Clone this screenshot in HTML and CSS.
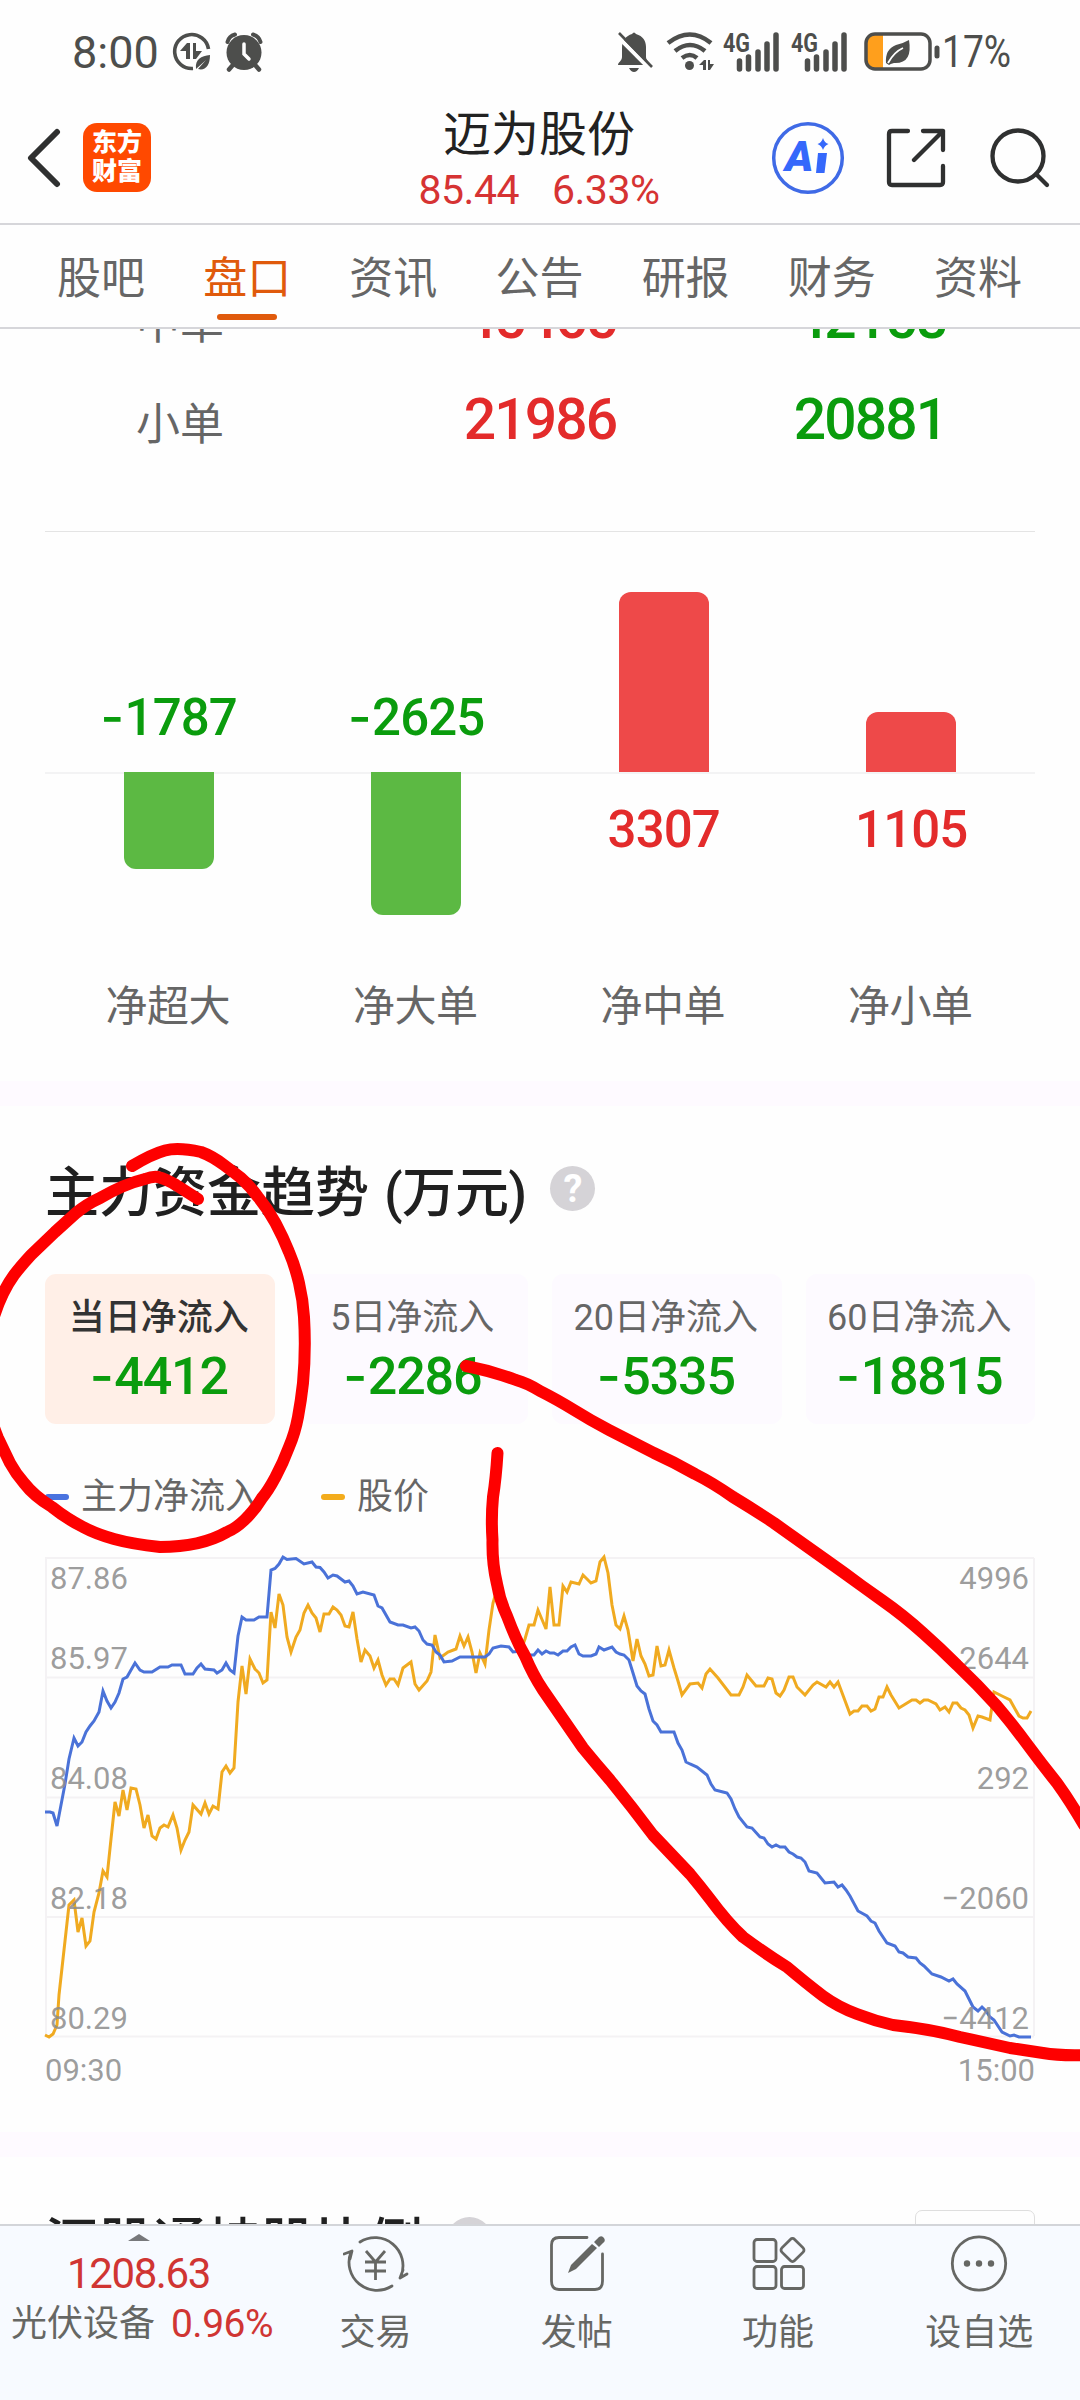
FILE: index.html
```html
<!DOCTYPE html>
<html lang="zh-CN">
<head>
  <meta charset="UTF-8">
  <meta name="viewport" content="width=device-width, initial-scale=1.0">
  <title>迈为股份</title>
  <link rel="stylesheet" href="styles.css">
</head>
<body>
  <div class="phone">
    <div class="status-bar">
      <span class="clock">8:00</span>
      <svg class="icon-data" width="39" height="40" viewBox="0 0 39 40">
        <path d="M36.500 17A17 17 0 1 0 21 36.500" fill="none" stroke="#4d4e4c" stroke-width="3.600"/>
        <path d="M8 19L15 11H18V27H14V19H8ZM21 11H24V19H30L24 27H21Z" fill="#4d4e4c"/>
        <path d="M24 37C23 27 29 24 38 23C38 34 33 39 26 37L34 28Z" fill="#4d4e4c"/>
      </svg>
      <svg class="icon-alarm" width="38" height="40" viewBox="0 0 38 40">
        <circle cx="19" cy="20.500" r="17.500" fill="#4d4e4c"/>
        <path d="M7 34L4 37.500M31 34L34 37.500" stroke="#4d4e4c" stroke-width="4.500" stroke-linecap="round"/>
        <path d="M2.500 10Q4 4 10 2.500M35.500 10Q34 4 28 2.500" fill="none" stroke="#4d4e4c" stroke-width="4" stroke-linecap="round"/>
        <path d="M19 12V22L24 27" fill="none" stroke="#fff" stroke-width="3.500" stroke-linecap="round"/>
      </svg>
      <div class="status-right">
        <svg class="icon-bell" width="36" height="42" viewBox="0 0 36 42">
          <path d="M1 34C1 31 5 30 5 26V17C5 9 9 5 15 3Q17 0 19 3C26 5 29 10 29 16V26C29 30 33 31 33 34Z" fill="#4d4e4c"/>
          <path d="M12 37H22Q20 41 17 41T12 37Z" fill="#4d4e4c"/>
          <path d="M-1 4L33 38" stroke="#fff" stroke-width="4"/>
          <path d="M2 2L35 36" stroke="#4d4e4c" stroke-width="2.600"/>
        </svg>
        <svg class="icon-wifi" width="48" height="40" viewBox="0 0 48 40">
          <path d="M2 11Q24 -6 45 11M9 19Q24 7 39 19M16 26Q24 20 31 26" fill="none" stroke="#4d4e4c" stroke-width="4.500"/>
          <circle cx="23.500" cy="33.500" r="4.500" fill="#4d4e4c"/>
          <path d="M33 33L38 28H40V38H37V33ZM42 28H44V32H48L44 38H42Z" fill="#4d4e4c"/>
        </svg>
        <svg class="icon-signal" width="58" height="40" viewBox="0 0 58 40">
          <text x="0" y="20" class="net-label" textLength="27" lengthAdjust="spacingAndGlyphs">4G</text>
          <path d="M16.500 29V37M25.500 25V37M35 20V37M44 12V37M53 3V37" stroke="#4d4e4c" stroke-width="5.500" stroke-linecap="round"/>
        </svg>
        <svg class="icon-signal" width="58" height="40" viewBox="0 0 58 40">
          <text x="0" y="20" class="net-label" textLength="27" lengthAdjust="spacingAndGlyphs">4G</text>
          <path d="M16.500 29V37M25.500 25V37M35 20V37M44 12V37M53 3V37" stroke="#4d4e4c" stroke-width="5.500" stroke-linecap="round"/>
        </svg>
        <svg class="icon-battery" width="77" height="40" viewBox="0 0 77 40">
          <path d="M3 9Q3 3 9 3H19V36H9Q3 36 3 30Z" fill="#ff9f1c"/>
          <rect x="2" y="2" width="64" height="35" rx="9" fill="none" stroke="#4d4e4c" stroke-width="3.500"/>
          <path d="M73 16V24" stroke="#4d4e4c" stroke-width="5" stroke-linecap="round"/>
          <path d="M22 31Q21 17 32 13Q40 11 45 8Q49 32 30 31Q26 32 25 33Z" fill="#4d4e4c"/>
          <path d="M24 31Q30 20 39 16" fill="none" stroke="#fff" stroke-width="1.800"/>
        </svg>
        <svg class="battery-level" width="67" height="40" viewBox="0 0 67 40">
          <text x="-3" y="35" textLength="69" lengthAdjust="spacingAndGlyphs">17%</text>
        </svg>
      </div>
    </div>

    <div class="header">
      <svg class="back" width="36" height="60" viewBox="0 0 36 60">
        <path d="M31 4L5 30L31 56" fill="none" stroke="#2f3030" stroke-width="6" stroke-linecap="round" stroke-linejoin="round"/>
      </svg>
      <div class="logo"><span>东方</span><span>财富</span></div>
      <div class="stock">
        <div class="stock-name">迈为股份</div>
        <div class="stock-price"><span>85.44</span><span>6.33%</span></div>
      </div>
      <svg class="ai" width="74" height="74" viewBox="0 0 74 74">
        <circle cx="37" cy="37" r="34.300" fill="none" stroke="#3f6ae6" stroke-width="3.500"/>
        <text x="14" y="50" class="ai-text">A</text>
        <path d="M47 32H56L53.500 52H45Z" fill="#3568fb"/>
        <path d="M52 17Q53.500 22 57.500 23Q53.500 24.500 52 29Q50.500 24.500 46.500 23Q50.500 22 52 17Z" fill="#3568fb"/>
      </svg>
      <svg class="share" width="60" height="60" viewBox="0 0 60 60">
        <path d="M22 3H6Q3 3 3 6V54Q3 57 6 57H54Q57 57 57 54V38M37 3H57V22M57 3L28 32" fill="none" stroke="#2f3030" stroke-width="4.300" stroke-linecap="round" stroke-linejoin="round"/>
      </svg>
      <svg class="search" width="62" height="62" viewBox="0 0 62 62">
        <circle cx="29" cy="29" r="25.500" fill="none" stroke="#2f3030" stroke-width="4.300"/>
        <path d="M47 47L58 58" stroke="#2f3030" stroke-width="4.300" stroke-linecap="round"/>
      </svg>
    </div>

    <div class="tabs">
      <span class="tab">股吧</span>
      <span class="tab active">盘口</span>
      <span class="tab">资讯</span>
      <span class="tab">公告</span>
      <span class="tab">研报</span>
      <span class="tab">财务</span>
      <span class="tab">资料</span>
    </div>

    <div class="content">
      <div class="orders">
        <div class="order-row"><span class="order-name">中单</span><span class="order-num red">45465</span><span class="order-num green">42158</span></div>
        <div class="order-row"><span class="order-name">小单</span><span class="order-num red">21986</span><span class="order-num green">20881</span></div>
      </div>

      <div class="net-chart">
        <div class="net-col">
          <div class="half top"><span class="net-value green"><i>-</i>1787</span></div>
          <div class="half bottom"><div class="bar down" style="height: 97px"></div></div>
          <div class="net-name">净超大</div>
        </div>
        <div class="net-col">
          <div class="half top"><span class="net-value green"><i>-</i>2625</span></div>
          <div class="half bottom"><div class="bar down" style="height: 143px"></div></div>
          <div class="net-name">净大单</div>
        </div>
        <div class="net-col">
          <div class="half top"><div class="bar up" style="height: 180px"></div></div>
          <div class="half bottom"><span class="net-value red">3307</span></div>
          <div class="net-name">净中单</div>
        </div>
        <div class="net-col">
          <div class="half top"><div class="bar up" style="height: 60px"></div></div>
          <div class="half bottom"><span class="net-value red">1105</span></div>
          <div class="net-name">净小单</div>
        </div>
      </div>

      <div class="band"></div>

      <div class="trend">
        <div class="section-title">主力资金趋势<span class="unit">(万元)</span><span class="help">?</span></div>
        <div class="cards">
          <div class="card selected"><div class="card-name">当日净流入</div><div class="card-num"><i>-</i>4412</div></div>
          <div class="card"><div class="card-name">5日净流入</div><div class="card-num"><i>-</i>2286</div></div>
          <div class="card"><div class="card-name">20日净流入</div><div class="card-num"><i>-</i>5335</div></div>
          <div class="card"><div class="card-name">60日净流入</div><div class="card-num"><i>-</i>18815</div></div>
        </div>
        <div class="legend">
          <span class="legend-item"><b class="dash blue"></b>主力净流入</span>
          <span class="legend-item"><b class="dash yellow"></b>股价</span>
        </div>
        <svg class="line-chart" width="990" height="530" viewBox="0 0 990 530">
          <path d="M0 0H989M0 119.500H989M0 239.500H989M0 359H989M0 478.500H989M1 0V478M989 0V478" class="grid"/>
          <polyline class="price" points="0,477 4,479 8,476 12,467 14,437 20,383 24,347 29,342 33,374 37,360 41,388 45,383 49,354 54,335 58,313 62,319 66,281 70,244 74,258 78,232 82,252 86,230 91,231 95,247 99,270 103,257 107,278 111,281 115,270 119,267 123,269 128,257 132,270 136,292 140,282 144,274 148,247 156,256 160,245 164,256 168,248 173,251 177,214 181,208 185,215 189,210 193,144 197,108 201,136 205,101 210,111 214,115 218,125 222,122 226,54 230,70 234,36 238,47 242,79 246,94 251,79 255,72 259,55 263,47 267,55 271,60 275,74 279,56 284,56 288,49 292,52 296,57 300,68 304,69 308,54 312,81 316,104 320,92 325,98 329,110 333,102 337,117 341,127 345,121 349,121 353,127 358,110 366,104 370,126 374,132 382,123 386,114 390,77 395,100 403,94 411,91 415,78 419,88 423,79 427,94 431,115 435,95 440,106 444,72 448,45 452,31 460,50 468,80 476,92 480,81 484,67 489,67 493,52 501,71 505,29 509,67 514,67 518,28 522,34 526,24 534,26 538,17 546,25 551,23 555,4 559,-1 563,15 567,47 571,67 575,71 579,58 583,72 588,103 592,81 596,98 600,106 604,118 608,117 612,88 616,108 620,107 624,92 629,110 633,123 637,137 645,126 653,125 657,130 661,116 665,111 673,120 686,137 694,137 698,129 702,117 711,128 719,128 723,120 727,121 731,135 735,138 739,132 744,119 748,119 752,129 760,137 768,127 772,124 781,129 785,124 789,129 793,124 805,156 809,153 813,153 817,148 822,148 826,153 830,151 834,139 838,139 842,129 846,137 854,150 867,142 871,142 875,145 879,142 883,142 891,146 895,152 900,149 904,154 908,145 912,145 916,150 920,152 924,157 928,170 933,158 937,159 945,162 949,134 957,138 965,142 974,158 978,160 982,160 986,153"/>
          <polyline class="flow" points="0,254 5,254 8,255 12,268 20,226 24,201 29,180 33,188 37,184 41,174 45,168 49,163 54,154 58,133 62,143 66,150 70,144 74,135 78,121 82,119 86,112 90,105 95,112 99,114 107,114 115,109 123,109 127,107 136,107 140,116 148,116 152,110 156,106 160,111 169,112 172,115 177,112 181,105 185,112 189,115 193,78 197,59 201,62 209,62 214,59 222,59 226,12 230,10.500 234,6 238,-1 242,1.500 251,0.500 259,6 267,4 271,9 275,9.500 279,14 283,20 288,17 292,18 300,24 304,23 308,28 312,36 318,34 329,37 333,48 337,50 345,64 353,67 358,67 366,70 370,69 374,73 378,82 382,86 387,87 391,94 395,97 399,104 407,103 415,99 423,99 440,99 444,96 448,90 456,88 464,89 468,94 477,93 485,97 489,97 493,92 497,96 501,93 505,95 509,95 513,97 518,93 522,93 526,89 530,87 534,96 538,98 546,98 551,96 554,89 559,92 567,89 571,94 575,96 579,97 584,102 588,115 592,128 596,133 600,136 604,151 608,163 612,167 616,174 629,174 633,185 637,192 641,204 645,206 652,209 662,217 666,226 670,232 678,234 682,235 686,241 690,251 694,259 702,269 707,270 715,279 719,280 723,286 727,289 731,287 735,289 740,289 744,294 748,296 752,299 756,300 760,304 764,313 772,315 780,325 789,324 793,329 797,327 801,332 805,338 813,353 822,358 826,363 830,365 834,373 842,385 850,388 854,394 858,395 863,399 871,400 875,405 879,408 887,416 896,419 904,423 908,421 912,426 920,433 924,441 928,449 933,453 937,449 941,453 945,459 949,462 957,474 965,478 969,477 974,479 986,479"/>
          <g class="axis">
            <text x="5" y="30.500">87.86</text>
            <text x="5" y="110.500">85.97</text>
            <text x="5" y="230.500">84.08</text>
            <text x="5" y="350.500">82.18</text>
            <text x="5" y="470.500">80.29</text>
            <text x="0" y="522.500">09:30</text>
          </g>
          <g class="axis end">
            <text x="984" y="30.500">4996</text>
            <text x="984" y="110.500">2644</text>
            <text x="984" y="230.500">292</text>
            <text x="984" y="350.500">−2060</text>
            <text x="984" y="470.500">−4412</text>
            <text x="990" y="522.500">15:00</text>
          </g>
        </svg>
      </div>

      <div class="band"></div>

      <div class="holding">
        <div class="section-title">深股通持股比例<span class="help">?</span></div>
        <div class="more"></div>
      </div>
    </div>

    <div class="bottom-bar">
      <div class="index">
        <div class="caret"></div>
        <div class="index-value">1208.63</div>
        <div class="index-line"><span>光伏设备</span><span class="index-rate">0.96%</span></div>
      </div>
      <div class="nav-item">
        <svg width="66" height="60" viewBox="0 0 66 60">
          <path d="M17 8A28 28 0 0 1 58 42M49 52A28 28 0 0 1 8 18M1 20L9 17L7 25M64 40L57 44L60 36" class="line"/>
          <path d="M23 17L32.500 28L42 17M22 28H43M22 37H43M32.500 28V46" class="line thin"/>
        </svg>
        <span>交易</span>
      </div>
      <div class="nav-item">
        <svg width="60" height="60" viewBox="0 0 60 60">
          <path d="M40 3.500H12Q4.500 3.500 4.500 11V47Q4.500 55.500 12 55.500H48Q55.500 55.500 55.500 47V20" class="line"/>
          <path d="M21 39L24 31L45 10L50 14L29 35Z M47 8L52 3Q55 1 57 4T56 9L52 13Z" fill="#666764"/>
        </svg>
        <span>发帖</span>
      </div>
      <div class="nav-item">
        <svg width="60" height="60" viewBox="0 0 60 60">
          <rect x="6" y="5.500" width="22" height="22" rx="3" class="line"/>
          <rect x="6" y="32.500" width="22" height="22" rx="3" class="line"/>
          <rect x="33.500" y="32.500" width="22" height="22" rx="3" class="line"/>
          <rect x="35.500" y="7" width="18" height="18" rx="3" transform="rotate(45 44.500 16)" class="line"/>
        </svg>
        <span>功能</span>
      </div>
      <div class="nav-item">
        <svg width="60" height="60" viewBox="0 0 60 60">
          <circle cx="30" cy="29.500" r="26.700" class="line"/>
          <circle cx="18" cy="29.500" r="3.200" fill="#666764"/>
          <circle cx="30" cy="29.500" r="3.200" fill="#666764"/>
          <circle cx="42" cy="29.500" r="3.200" fill="#666764"/>
        </svg>
        <span>设自选</span>
      </div>
    </div>

    <!-- hand drawn marks over the page -->
    <svg class="marks" width="1080" height="2400" viewBox="0 0 1080 2400">
      <path d="M132 1166Q152 1154 165 1150.500T201 1152Q212 1156 224 1165T241 1178Q250 1186 258 1197Q268 1209 275.500 1223T289 1252Q295 1266 299 1283T304 1317Q306 1350 303 1383Q301 1401 298 1417T289 1447Q283 1463 275.500 1477T262 1498Q254 1511 244.500 1520T227 1532Q201 1547 160 1547Q132 1544 114 1539T83 1527Q67 1519 52 1507Q34 1496 24 1483Q16 1474 10 1463L-2 1438Q-22 1390 -12 1340Q-4 1300 14 1275Q20 1267 31 1255L55 1232L76 1213Q87 1204 100 1198Q124 1184 145 1179Q153 1176 158 1177Q166 1179 176 1185L198 1199"/>
      <path d="M466 1366Q492 1371 516 1380Q527 1383 540 1391Q556 1399 574 1410Q590 1420 609 1430L654 1453Q674 1462 695 1474Q713 1483 733 1497Q753 1509 774 1523L826 1560Q843 1572 862 1586L883 1601Q903 1615 923 1633Q940 1648 957 1665Q977 1684 997 1706Q1013 1725 1027 1744T1057 1783Q1070 1801 1084 1825"/>
      <path d="M1088 2055Q1060 2056 1043 2053L1010 2048L960 2037Q930 2029 893 2025Q875 2021 857 2014Q838 2007 823 1996Q806 1983 787 1967Q766 1954 743 1937Q727 1922 710 1899Q700 1886 690 1874Q671 1854 653 1835Q632 1807 610 1780Q597 1765 583 1748Q563 1719 543 1690Q533 1675 525 1656Q516 1640 507 1616Q500 1601 497 1584Q492 1563 492.500 1540Q491 1518 493 1497Q496 1478 497.500 1453"/>
    </svg>
  </div>
</body>
</html>
```
FILE: styles.css
```css
* {
  margin: 0;
  padding: 0;
  box-sizing: border-box;
}
body {
  font-family: Roboto, "Noto Sans CJK SC", sans-serif;
  background-color: #fefefe;
  width: 1080px;
}
i {
  font-family: Inter, sans-serif;
  font-style: normal;
  letter-spacing: 0.5px;
}
.red {
  color: #e32b2b;
}
.green {
  color: #0a9c0d;
}
.phone {
  position: relative;
  width: 1080px;
  height: 2400px;
  overflow: hidden;
  display: flex;
  flex-direction: column;
}

/* status bar */
.status-bar {
  height: 104px;
  padding: 0 68px 0 72px;
  display: flex;
  align-items: center;
  color: #4d4e4c;
}
.clock {
  font-size: 45px;
  width: 88px;
  margin-right: 12px;
}
.icon-data {
  margin-right: 14px;
}
.status-right {
  margin-left: auto;
  display: flex;
  align-items: center;
}
.icon-bell {
  margin-right: 13px;
}
.icon-wifi {
  margin-right: 9px;
}
.icon-signal {
  margin-right: 10px;
  overflow: visible;
}
.icon-battery {
  margin: 0 4px 0 5px;
}
.net-label {
  font-size: 26px;
  font-weight: 700;
  fill: #4d4e4c;
}
.battery-level {
  font-size: 45px;
  fill: #4d4e4c;
  overflow: visible;
}

/* header */
.header {
  height: 121px;
  padding: 0 28px 12px 26px;
  border-bottom: 2px solid #d6d6da;
  display: flex;
  align-items: center;
}
.logo {
  width: 68px;
  height: 69px;
  margin-left: 21px;
  border-radius: 14px;
  background-color: #ff4900;
  color: #fff;
  font-size: 25px;
  font-weight: 900;
  line-height: 29px;
  padding-top: 5px;
  display: flex;
  flex-direction: column;
  align-items: center;
}
.stock {
  width: 240px;
  margin-left: 268px;
  padding-top: 4px;
  text-align: center;
}
.stock-name {
  font-size: 48px;
  line-height: 60px;
  color: #222;
}
.stock-price {
  display: flex;
  justify-content: center;
  gap: 33px;
  font-size: 41px;
  line-height: 50px;
  letter-spacing: -0.5px;
  color: #d63333;
}
.ai {
  margin-left: 112px;
}
.ai-text {
  font-size: 43px;
  font-weight: 900;
  font-style: italic;
  fill: #3568fb;
}
.share {
  margin-left: 41px;
}
.search {
  margin-left: 43px;
}

/* tabs */
.tabs {
  height: 104px;
  padding: 0 29px 0 28px;
  border-bottom: 2px solid #d6d6da;
  display: flex;
}
.tab {
  flex: 1;
  padding-top: 3px;
  text-align: center;
  font-size: 44px;
  line-height: 102px;
  height: 102px;
  color: #666;
  display: flex;
  flex-direction: column;
  align-items: center;
}
.tab.active {
  color: #e05a0c;
}
.tab.active::after {
  content: "";
  width: 60px;
  height: 6px;
  margin-top: -16px;
  border-radius: 3px;
  background-color: #e05a0c;
}

.content {
  height: 1895px;
  overflow: hidden;
}

/* orders table */
.orders {
  margin: -60px 45px 0;
  height: 263px;
  border-bottom: 1px solid #e4e4e4;
}
.order-row {
  display: grid;
  grid-template-columns: 270px 450px 210px;
  align-items: center;
  text-align: center;
  height: 101px;
}
.order-name {
  font-size: 44px;
  color: #666;
}
.order-num {
  font-size: 57px;
  font-weight: 500;
  letter-spacing: -1.9px;
  margin-top: -3px;
}

/* net bars */
.net-chart {
  height: 549px;
  margin: 0 45px;
  display: grid;
  grid-template-columns: repeat(4, 1fr);
}
.net-col {
  display: flex;
  flex-direction: column;
}
.half {
  display: flex;
  justify-content: center;
}
.half.top {
  height: 240px;
  align-items: flex-end;
}
.half.bottom {
  height: 204px;
  align-items: flex-start;
  border-top: 2px solid #f3f3f4;
}
.bar {
  width: 90px;
}
.bar.up {
  background-color: #ee4949;
  border-radius: 12px 12px 0 0;
}
.bar.down {
  background-color: #5cb943;
  border-radius: 0 0 12px 12px;
  margin-top: -2px;
}
.net-value {
  font-size: 51px;
  font-weight: 500;
  line-height: 60px;
  letter-spacing: -0.9px;
}
.top .net-value {
  margin-bottom: 24px;
}
.bottom .net-value {
  margin-top: 26px;
}
.net-name {
  font-size: 42px;
  line-height: 62px;
  letter-spacing: -0.5px;
  margin-right: 2px;
  text-align: center;
  color: #666;
}

.band {
  height: 25px;
  background-color: #fefaff;
}

/* trend */
.trend {
  height: 1026px;
  padding: 0 45px;
}
.section-title {
  height: 168px;
  padding-bottom: 4px;
  display: flex;
  align-items: center;
  font-size: 54px;
  font-weight: 500;
  color: #202020;
}
.unit {
  margin-left: 15px;
  letter-spacing: -0.8px;
}
.help {
  width: 45px;
  height: 45px;
  margin-left: 24px;
  border-radius: 50%;
  background-color: #d5d3d7;
  color: #fff;
  font-size: 38px;
  font-weight: 700;
  line-height: 46px;
  text-align: center;
}
.cards {
  display: flex;
  gap: 24px;
}
.card {
  flex: 1;
  height: 150px;
  padding: 18px 2px 0 0;
  border-radius: 11px;
  background-color: #fdfaff;
  text-align: center;
}
.card.selected {
  background-color: #ffefe7;
}
.card-name {
  font-size: 36px;
  line-height: 52px;
  color: #666;
}
.selected .card-name {
  color: #333;
  font-weight: 500;
}
.card-num {
  font-size: 52px;
  font-weight: 500;
  line-height: 64px;
  letter-spacing: -1.2px;
  color: #0a9c0d;
}
.legend {
  height: 134px;
  padding-top: 12px;
  display: flex;
  align-items: center;
  font-size: 36px;
  line-height: 52px;
  color: #666;
}
.legend-item {
  display: flex;
  align-items: center;
  margin-right: 60px;
}
.dash {
  width: 24px;
  height: 6px;
  margin-right: 12px;
  border-radius: 3px;
}
.dash.blue {
  background-color: #4a73df;
}
.dash.yellow {
  background-color: #f3ac1c;
}
.line-chart {
  display: block;
  overflow: visible;
}
.grid {
  fill: none;
  stroke: #f4f2f4;
  stroke-width: 2;
}
.price {
  fill: none;
  stroke: #f0aa20;
  stroke-width: 3;
}
.flow {
  fill: none;
  stroke: #4a72d8;
  stroke-width: 3;
}
.axis {
  font-size: 31px;
  fill: #8c8c8c;
  fill-opacity: 0.85;
}
.axis.end {
  text-anchor: end;
}

.holding {
  padding: 0 45px;
  display: flex;
  justify-content: space-between;
}
.more {
  width: 120px;
  height: 70px;
  margin-top: 53px;
  border: 1px solid #dedede;
  border-radius: 7px;
}

/* bottom bar */
.bottom-bar {
  height: 176px;
  border-top: 2px solid #d3d5d9;
  background-color: #f7faff;
  display: flex;
  color: #666764;
}
.index {
  width: 275px;
  padding-left: 2px;
  display: flex;
  flex-direction: column;
  align-items: center;
}
.caret {
  margin-top: 8px;
  border: 11px solid transparent;
  border-top: 0;
  border-bottom: 7px solid #77787b;
}
.index-value {
  margin-top: 8px;
  font-size: 42px;
  line-height: 50px;
  letter-spacing: -1.4px;
  color: #d03533;
}
.index-line {
  display: flex;
  align-items: center;
  gap: 16px;
  margin: 2px 0 0 7px;
  font-size: 36px;
  line-height: 46px;
}
.index-rate {
  font-size: 39px;
  letter-spacing: -0.5px;
  color: #d03533;
}
.nav-item {
  flex: 1;
  padding-top: 8px;
  display: flex;
  flex-direction: column;
  align-items: center;
  font-size: 36px;
  line-height: 50px;
}
.nav-item span {
  margin-top: 14px;
}
.line {
  fill: none;
  stroke: #666764;
  stroke-width: 2.800;
  stroke-linecap: round;
  stroke-linejoin: round;
}
.thin {
  stroke-linecap: butt;
}

.marks {
  position: absolute;
  left: 0;
  top: 0;
}
.marks path {
  fill: none;
  stroke: #fe0000;
  stroke-width: 12;
  stroke-linecap: round;
  stroke-linejoin: round;
}
```
